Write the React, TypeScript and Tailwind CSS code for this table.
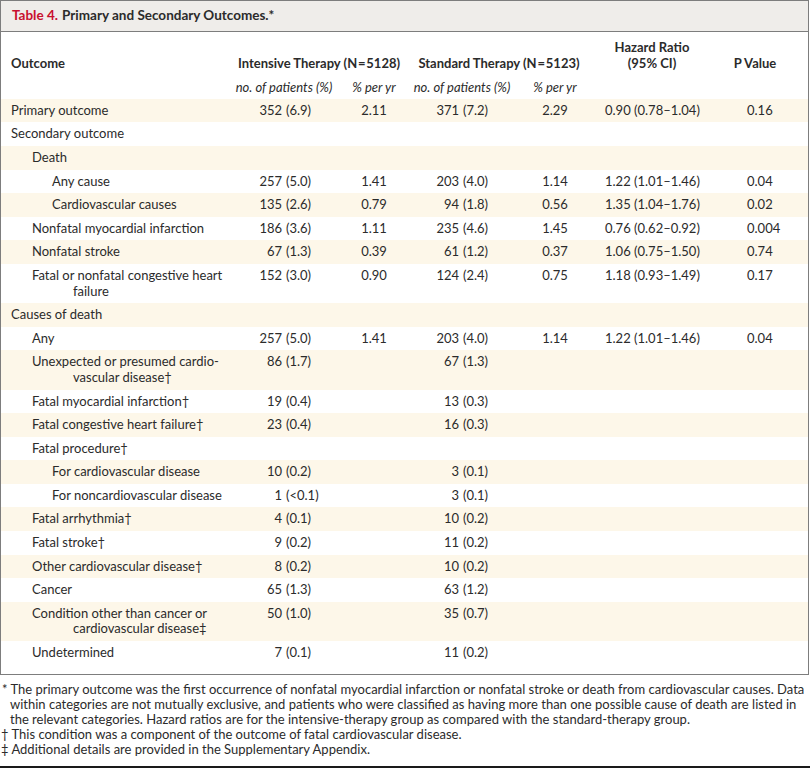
import React from "react";

type Row = {
  label: string[];
  level: 0 | 1 | 2;
  n1?: [string, string];
  r1?: string;
  n2?: [string, string];
  r2?: string;
  hr?: string;
  p?: string;
};

const rows: Row[] = [
  { label: ["Primary outcome"], level: 0, n1: ["352", "(6.9)"], r1: "2.11", n2: ["371", "(7.2)"], r2: "2.29", hr: "0.90 (0.78–1.04)", p: "0.16" },
  { label: ["Secondary outcome"], level: 0 },
  { label: ["Death"], level: 1 },
  { label: ["Any cause"], level: 2, n1: ["257", "(5.0)"], r1: "1.41", n2: ["203", "(4.0)"], r2: "1.14", hr: "1.22 (1.01–1.46)", p: "0.04" },
  { label: ["Cardiovascular causes"], level: 2, n1: ["135", "(2.6)"], r1: "0.79", n2: ["94", "(1.8)"], r2: "0.56", hr: "1.35 (1.04–1.76)", p: "0.02" },
  { label: ["Nonfatal myocardial infarction"], level: 1, n1: ["186", "(3.6)"], r1: "1.11", n2: ["235", "(4.6)"], r2: "1.45", hr: "0.76 (0.62–0.92)", p: "0.004" },
  { label: ["Nonfatal stroke"], level: 1, n1: ["67", "(1.3)"], r1: "0.39", n2: ["61", "(1.2)"], r2: "0.37", hr: "1.06 (0.75–1.50)", p: "0.74" },
  { label: ["Fatal or nonfatal congestive heart", "failure"], level: 1, n1: ["152", "(3.0)"], r1: "0.90", n2: ["124", "(2.4)"], r2: "0.75", hr: "1.18 (0.93–1.49)", p: "0.17" },
  { label: ["Causes of death"], level: 0 },
  { label: ["Any"], level: 1, n1: ["257", "(5.0)"], r1: "1.41", n2: ["203", "(4.0)"], r2: "1.14", hr: "1.22 (1.01–1.46)", p: "0.04" },
  { label: ["Unexpected or presumed cardio-", "vascular disease†"], level: 1, n1: ["86", "(1.7)"], n2: ["67", "(1.3)"] },
  { label: ["Fatal myocardial infarction†"], level: 1, n1: ["19", "(0.4)"], n2: ["13", "(0.3)"] },
  { label: ["Fatal congestive heart failure†"], level: 1, n1: ["23", "(0.4)"], n2: ["16", "(0.3)"] },
  { label: ["Fatal procedure†"], level: 1 },
  { label: ["For cardiovascular disease"], level: 2, n1: ["10", "(0.2)"], n2: ["3", "(0.1)"] },
  { label: ["For noncardiovascular disease"], level: 2, n1: ["1", "(<0.1)"], n2: ["3", "(0.1)"] },
  { label: ["Fatal arrhythmia†"], level: 1, n1: ["4", "(0.1)"], n2: ["10", "(0.2)"] },
  { label: ["Fatal stroke†"], level: 1, n1: ["9", "(0.2)"], n2: ["11", "(0.2)"] },
  { label: ["Other cardiovascular disease†"], level: 1, n1: ["8", "(0.2)"], n2: ["10", "(0.2)"] },
  { label: ["Cancer"], level: 1, n1: ["65", "(1.3)"], n2: ["63", "(1.2)"] },
  { label: ["Condition other than cancer or", "cardiovascular disease‡"], level: 1, n1: ["50", "(1.0)"], n2: ["35", "(0.7)"] },
  { label: ["Undetermined"], level: 1, n1: ["7", "(0.1)"], n2: ["11", "(0.2)"] },
];

const grid = "grid grid-cols-[231px_110px_64px_112px_74px_120px_86px_1fr]";

function Count({ v, w }: { v?: [string, string]; w: string }) {
  if (!v) return <div />;
  return (
    <div className="whitespace-nowrap">
      <span className={`inline-block text-right ${w}`}>{v[0]}</span>
      <span className="ml-[4px]">{v[1]}</span>
    </div>
  );
}

export default function App() {
  return (
    <div
      className="w-[810px] bg-white text-[#2b2b2b] text-[13px] leading-[15.6px]"
      style={{ fontFamily: "Lato, 'Open Sans', sans-serif" }}
    >
      <div className="w-[809px] border border-[#7d7d7d]">
        <div className="h-[31px] bg-[#efedea] border-b border-[#7d7d7d] flex items-center pl-[11px] font-bold text-[13.5px]">
          <span className="text-[#c8102e]">Table 4.</span>
          <span className="ml-[4px]">Primary and Secondary Outcomes.*</span>
        </div>
        <div className={`${grid} items-end pt-[8px] pb-[3px] font-bold`}>
          <div className="pl-[10px]">Outcome</div>
          <div className="col-span-2 text-center whitespace-nowrap">Intensive Therapy (N{"\u200A=\u200A"}5128)</div>
          <div className="col-span-2 text-center whitespace-nowrap">Standard Therapy (N{"\u200A=\u200A"}5123)</div>
          <div className="text-center">
            Hazard Ratio
            <br />
            (95% CI)
          </div>
          <div className="text-center">P Value</div>
          <div />
        </div>
        <div className={`${grid} italic pt-[6px] pb-[3px]`}>
          <div />
          <div className="text-center pr-[6px] whitespace-nowrap">no. of patients (%)</div>
          <div className="text-center whitespace-nowrap">% per yr</div>
          <div className="text-center whitespace-nowrap">no. of patients (%)</div>
          <div className="text-center whitespace-nowrap">% per yr</div>
          <div />
          <div />
          <div />
        </div>
        <div className="pb-[9px]">
          {rows.map((r, i) => (
            <div
              key={i}
              className={`${grid} py-[4px] ${i % 2 === 0 ? "bg-[#fdf7e9]" : "bg-white"}`}
            >
              <div
                className={`whitespace-nowrap ${
                  r.level === 0 ? "pl-[10px]" : r.level === 1 ? "pl-[31px]" : "pl-[51px]"
                }`}
              >
                <div>{r.label[0]}</div>
                {r.label[1] && <div className="pl-[41px]">{r.label[1]}</div>}
              </div>
              <Count v={r.n1} w="w-[50px]" />
              <div className="text-center">{r.r1}</div>
              <Count v={r.n2} w="w-[53px]" />
              <div className="text-center">{r.r2}</div>
              <div className="pl-[13px] whitespace-nowrap">{r.hr}</div>
              <div className="pl-[35px]">{r.p}</div>
              <div />
            </div>
          ))}
        </div>
      </div>
      <div className="pt-[7px] pb-[9px] text-[13px] leading-[15px]">
        <p className="pl-[10px] -indent-[8px]">
          * The primary outcome was the first occurrence of nonfatal myocardial infarction or nonfatal stroke or death from cardiovascular causes. Data within categories are not mutually exclusive, and patients who were classified as having more than one possible cause of death are listed in the relevant categories. Hazard ratios are for the intensive-therapy group as compared with the standard-therapy group.
        </p>
        <p className="pl-[10px] -indent-[9px]">† This condition was a component of the outcome of fatal cardiovascular disease.</p>
        <p className="pl-[10px] -indent-[9px]">‡ Additional details are provided in the Supplementary Appendix.</p>
      </div>
      <div className="h-[2px] bg-[#1a1a1a]" />
    </div>
  );
}
